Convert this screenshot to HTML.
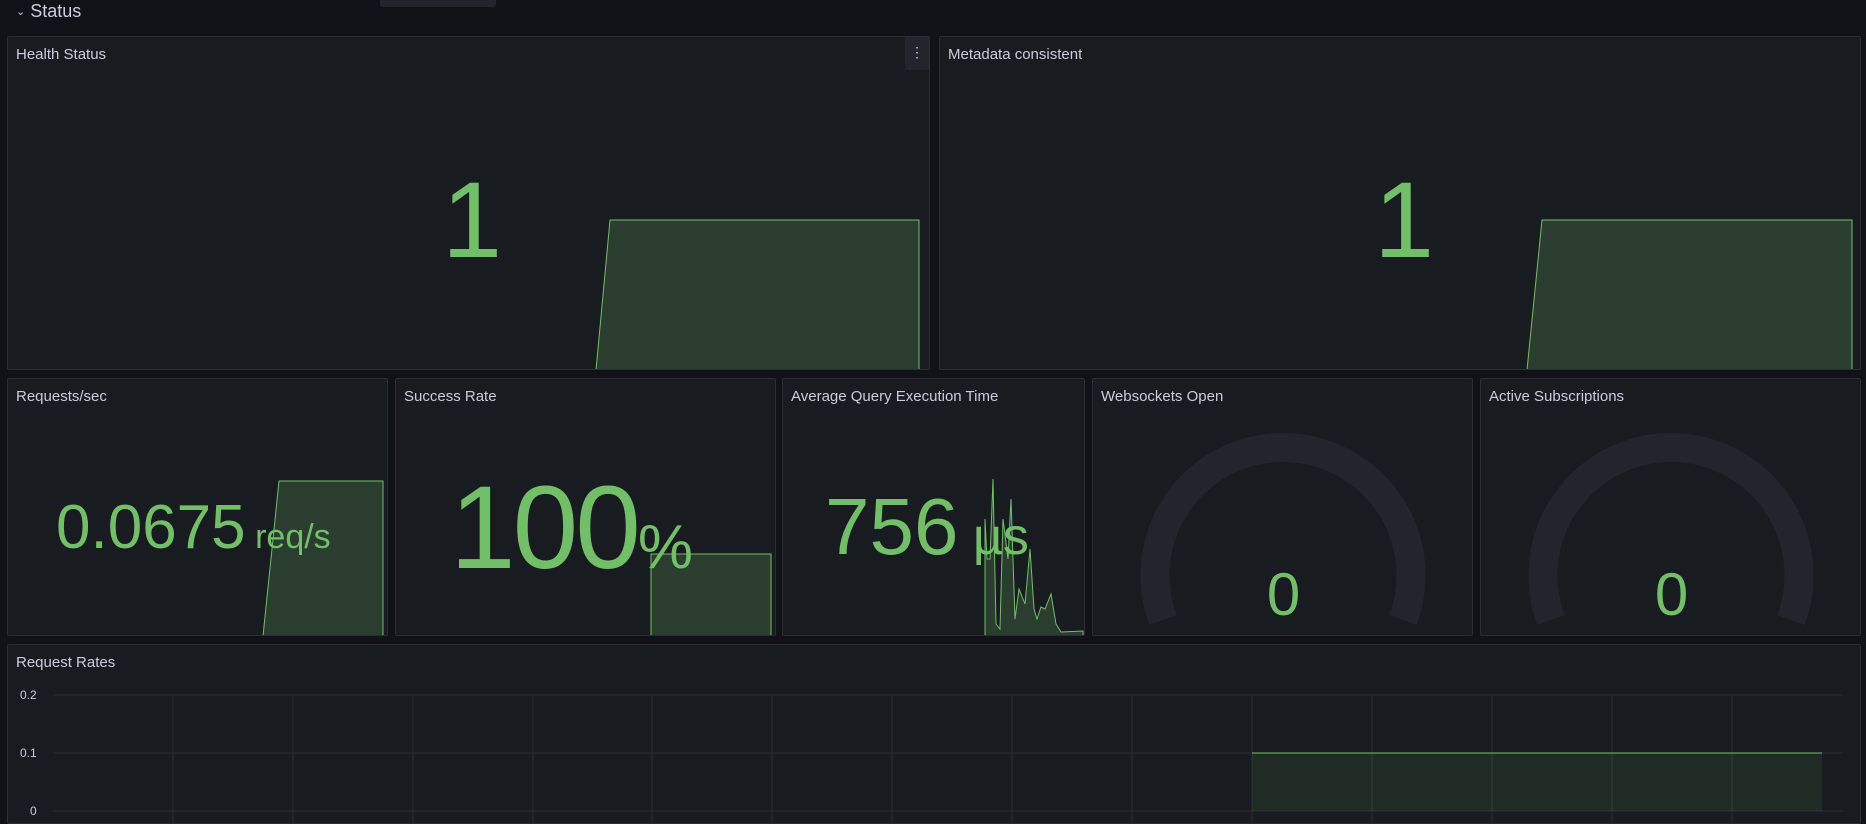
<!DOCTYPE html>
<html><head><meta charset="utf-8"><style>
*{margin:0;padding:0;box-sizing:border-box}
body{width:1866px;height:815px;background:#111217;overflow:hidden;position:relative;font-family:"Liberation Sans",sans-serif;color:#ccccdc}
.p{position:absolute;background:#181b1f;border:1px solid #2a2d33;border-radius:2px;overflow:hidden}
.t{position:absolute;left:8px;top:9px;font-size:15px;color:#ccccdc}
.v{position:absolute;color:#73bf69;white-space:nowrap;line-height:1}
svg{position:absolute;left:0;top:0}
</style></head><body>
<div style="position:absolute;left:380px;top:0;width:116px;height:7px;background:#22252b;border-radius:0 0 3px 3px"></div>
<div style="position:absolute;left:16px;top:1px;font-size:18px;color:#ccccdc"><span style="font-size:11px;vertical-align:2px">⌄</span> Status</div>

<div class="p" style="left:7px;top:36px;width:923px;height:334px">
<svg width="923" height="334"><path d="M588 333 L602 183 L911 183 L911 333Z" fill="#2a3d2f" stroke="#73bf69" stroke-width="1"/></svg>
<div class="t">Health Status</div>
<div style="position:absolute;right:0;top:0;width:24px;height:33px;background:#22252b;color:#ccccdc;text-align:center;font-size:14px;line-height:30px">⋮</div>
<div class="v" style="left:434px;top:129px;font-size:108px">1</div>
</div>
<div class="p" style="left:939px;top:36px;width:922px;height:334px">
<svg width="922" height="334"><path d="M587 333 L602 183 L912 183 L912 333Z" fill="#2a3d2f" stroke="#73bf69" stroke-width="1"/></svg>
<div class="t">Metadata consistent</div>
<div class="v" style="left:434px;top:129px;font-size:108px">1</div>
</div>

<div class="p" style="left:7px;top:378px;width:381px;height:258px">
<svg width="381" height="258"><path d="M255 257 L271 102 L375 102 L375 257Z" fill="#2a3d2f" stroke="#73bf69" stroke-width="1"/></svg>
<div class="t">Requests/sec</div>
<div class="v" style="left:48px;top:118px;font-size:62px">0.0675<span style="font-size:34px"> req/s</span></div>
</div>
<div class="p" style="left:395px;top:378px;width:381px;height:258px">
<svg width="381" height="258"><path d="M255 175 L375 175 L375 257 L255 257Z" fill="#2a3d2f" stroke="#73bf69" stroke-width="1"/></svg>
<div class="t">Success Rate</div>
<div class="v" style="left:54px;top:90px;font-size:118px;letter-spacing:-3px">100<span style="font-size:62px;letter-spacing:0">%</span></div>
</div>
<div class="p" style="left:782px;top:378px;width:303px;height:258px">
<svg width="303" height="258"><path d="M202 257 L202 140 L204 180 L207 180 L210 100 L213 245 L217 250 L220 140 L225 180 L228 120 L232 240 L236 210 L242 225 L247 170 L251 230 L254 240 L258 228 L262 230 L268 215 L273 245 L278 253 L300 252 L300 257Z" fill="#2a3d2f" stroke="#73bf69" stroke-width="1"/></svg>
<div class="t">Average Query Execution Time</div>
<div class="v" style="left:42px;top:108px;font-size:80px">756<span style="font-size:52px"> µs</span></div>
</div>
<div class="p" style="left:1092px;top:378px;width:381px;height:258px">
<svg width="381" height="258"><path d="M70 241 A128 128 0 1 1 310 241" fill="none" stroke="#22252b" stroke-width="29"/></svg>
<div class="t">Websockets Open</div>
<div class="v" style="left:0;width:381px;text-align:center;top:186px;font-size:60px">0</div>
</div>
<div class="p" style="left:1480px;top:378px;width:381px;height:258px">
<svg width="381" height="258"><path d="M70 241 A128 128 0 1 1 310 241" fill="none" stroke="#22252b" stroke-width="29"/></svg>
<div class="t">Active Subscriptions</div>
<div class="v" style="left:0;width:381px;text-align:center;top:186px;font-size:60px">0</div>
</div>

<div class="p" style="left:7px;top:644px;width:1854px;height:180px">
<div class="t">Request Rates</div>
<svg width="1854" height="180">
<g stroke="#2a2d33" stroke-width="1">
<line x1="45" y1="50" x2="1835" y2="50"/><line x1="45" y1="108" x2="1835" y2="108"/><line x1="45" y1="166" x2="1835" y2="166"/>
<line x1="165" y1="50" x2="165" y2="180"/><line x1="285" y1="50" x2="285" y2="180"/><line x1="405" y1="50" x2="405" y2="180"/><line x1="525" y1="50" x2="525" y2="180"/><line x1="644" y1="50" x2="644" y2="180"/><line x1="764" y1="50" x2="764" y2="180"/><line x1="884" y1="50" x2="884" y2="180"/><line x1="1004" y1="50" x2="1004" y2="180"/><line x1="1124" y1="50" x2="1124" y2="180"/><line x1="1244" y1="50" x2="1244" y2="180"/><line x1="1364" y1="50" x2="1364" y2="180"/><line x1="1484" y1="50" x2="1484" y2="180"/><line x1="1604" y1="50" x2="1604" y2="180"/><line x1="1724" y1="50" x2="1724" y2="180"/>
</g>
<rect x="1244" y="108" width="570" height="58" fill="#73bf69" fill-opacity="0.1"/>
<line x1="1244" y1="108" x2="1814" y2="108" stroke="#73bf69" stroke-width="1"/>
<text x="12" y="54" font-size="12" fill="#ccccdc" font-family="Liberation Sans">0.2</text>
<text x="12" y="112" font-size="12" fill="#ccccdc" font-family="Liberation Sans">0.1</text>
<text x="22" y="170" font-size="12" fill="#ccccdc" font-family="Liberation Sans">0</text>
</svg>
</div>
</body></html>
